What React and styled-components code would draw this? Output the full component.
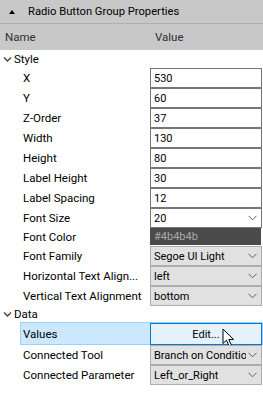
import React from "react";
import styled, { createGlobalStyle } from "styled-components";

const Global = createGlobalStyle`
  html, body { margin: 0; padding: 0; background: #fff; }
  body { font-family: Roboto, "Noto Sans", sans-serif; font-size: 11px; color: #000; }
`;

const Panel = styled.div`
  width: 263px;
  height: 415px;
  background: #fff;
  overflow: hidden;
  position: relative;
`;

const TitleBar = styled.div`
  height: 24px;
  background: #c8c8c8;
  border-bottom: 1px solid #b0b0b0;
  box-sizing: border-box;
  display: flex;
  align-items: center;
  padding-left: 9px;
  gap: 11px;
  font-size: 11.2px;
`;

const Triangle = styled.span`
  width: 0;
  height: 0;
  border-left: 3px solid transparent;
  border-right: 3px solid transparent;
  border-bottom: 4px solid #000;
  margin-right: 2px;
`;

const Header = styled.div`
  height: 26px;
  background: #c8c8c8;
  display: grid;
  grid-template-columns: 150px 1fr;
  align-items: center;
  color: #303030;
  font-size: 11.5px;
`;

const HeaderCell = styled.div`
  padding-left: ${(p) => p.$pad}px;
`;

const Category = styled.div`
  height: ${(p) => p.$h}px;
  display: flex;
  align-items: center;
  padding-left: 3px;
  gap: 2px;
  font-size: 11.5px;
`;

const Row = styled.div`
  height: ${(p) => p.$h || 20}px;
  display: grid;
  align-items: stretch;
  position: relative;
  margin-left: ${(p) => (p.$selected ? 20 : 0)}px;
  background: ${(p) => (p.$selected ? "#cce8ff" : "transparent")};
  border: ${(p) => (p.$selected ? "1px solid #99d1ff" : "none")};
  box-sizing: border-box;
  grid-template-columns: ${(p) => (p.$selected ? "129px 112px" : "150px 112px")};
`;

const Label = styled.div`
  display: flex;
  align-items: center;
  padding-left: ${(p) => (p.$selected ? 2 : 23)}px;
  white-space: nowrap;
  overflow: hidden;
  font-size: 11.5px;
`;

const TextBox = styled.div`
  border: 1px solid #767676;
  box-sizing: border-box;
  background: #fff;
  display: flex;
  align-items: center;
  padding-left: 3px;
`;

const Combo = styled.div`
  border: 1px solid ${(p) => (p.$editable ? "#767676" : "#adadad")};
  box-sizing: border-box;
  background: ${(p) => (p.$editable ? "#fff" : "#e1e1e1")};
  display: flex;
  align-items: center;
  justify-content: space-between;
  gap: 2px;
  padding: 0 4px 0 3px;
  white-space: nowrap;
  overflow: hidden;
`;

const ComboText = styled.span`
  overflow: hidden;
`;

const ColorBox = styled.div`
  background: #4b4b4b;
  color: #a8a8a8;
  display: flex;
  align-items: center;
  padding-left: 4px;
  margin: 0 1px 1px 0;
`;

const EditButton = styled.div`
  background: #e5f1fb;
  border: 1px solid #0078d7;
  box-sizing: border-box;
  display: flex;
  align-items: center;
  justify-content: center;
  margin: 0 0 -1px 0;
`;

const Cursor = styled.svg`
  position: absolute;
  left: 201px;
  top: 5px;
`;

const Chevron = ({ color = "#606060" }) => (
  <svg width="9" height="6" viewBox="0 0 9 6" style={{ flexShrink: 0 }}>
    <path d="M0.5 0.8 L4.5 4.8 L8.5 0.8" fill="none" stroke={color} strokeWidth="1" />
  </svg>
);

const CatChevron = () => (
  <svg width="9" height="7" viewBox="0 0 9 7">
    <path d="M1 1.5 L4.5 5 L8 1.5" fill="none" stroke="#404040" strokeWidth="1.3" />
  </svg>
);

const textRows = [
  ["X", "530"],
  ["Y", "60"],
  ["Z-Order", "37"],
  ["Width", "130"],
  ["Height", "80"],
  ["Label Height", "30"],
  ["Label Spacing", "12"],
];

export default function App() {
  return (
    <>
      <Global />
      <Panel>
        <TitleBar>
          <Triangle />
          <span>Radio Button Group Properties</span>
        </TitleBar>
        <Header>
          <HeaderCell $pad={5}>Name</HeaderCell>
          <HeaderCell $pad={5}>Value</HeaderCell>
        </Header>

        <Category $h={18}>
          <CatChevron />
          <span>Style</span>
        </Category>
        {textRows.map(([k, v]) => (
          <Row key={k}>
            <Label>{k}</Label>
            <TextBox>{v}</TextBox>
          </Row>
        ))}
        <Row>
          <Label>Font Size</Label>
          <Combo $editable>
            <ComboText>20</ComboText>
            <Chevron />
          </Combo>
        </Row>
        <Row $h={18}>
          <Label>Font Color</Label>
          <ColorBox>#4b4b4b</ColorBox>
        </Row>
        <Row>
          <Label>Font Family</Label>
          <Combo>
            <ComboText>Segoe UI Light</ComboText>
            <Chevron />
          </Combo>
        </Row>
        <Row>
          <Label>Horizontal Text Align...</Label>
          <Combo>
            <ComboText>left</ComboText>
            <Chevron />
          </Combo>
        </Row>
        <Row>
          <Label>Vertical Text Alignment</Label>
          <Combo>
            <ComboText>bottom</ComboText>
            <Chevron />
          </Combo>
        </Row>

        <Category $h={16}>
          <CatChevron />
          <span>Data</span>
        </Category>
        <Row $h={23} $selected>
          <Label $selected>Values</Label>
          <EditButton>Edit...</EditButton>
          <Cursor width="13" height="20" viewBox="0 0 13 20">
            <path
              d="M1 1 L1 15.5 L4.5 12.2 L7.2 18.3 L9.4 17.3 L6.8 11.4 L11.5 11.4 Z"
              fill="#fff"
              stroke="#000"
              strokeWidth="1"
              strokeLinejoin="miter"
            />
          </Cursor>
        </Row>
        <Row>
          <Label>Connected Tool</Label>
          <Combo>
            <ComboText>Branch on Conditio</ComboText>
            <Chevron />
          </Combo>
        </Row>
        <Row>
          <Label>Connected Parameter</Label>
          <Combo>
            <ComboText>Left_or_Right</ComboText>
            <Chevron />
          </Combo>
        </Row>
      </Panel>
    </>
  );
}
